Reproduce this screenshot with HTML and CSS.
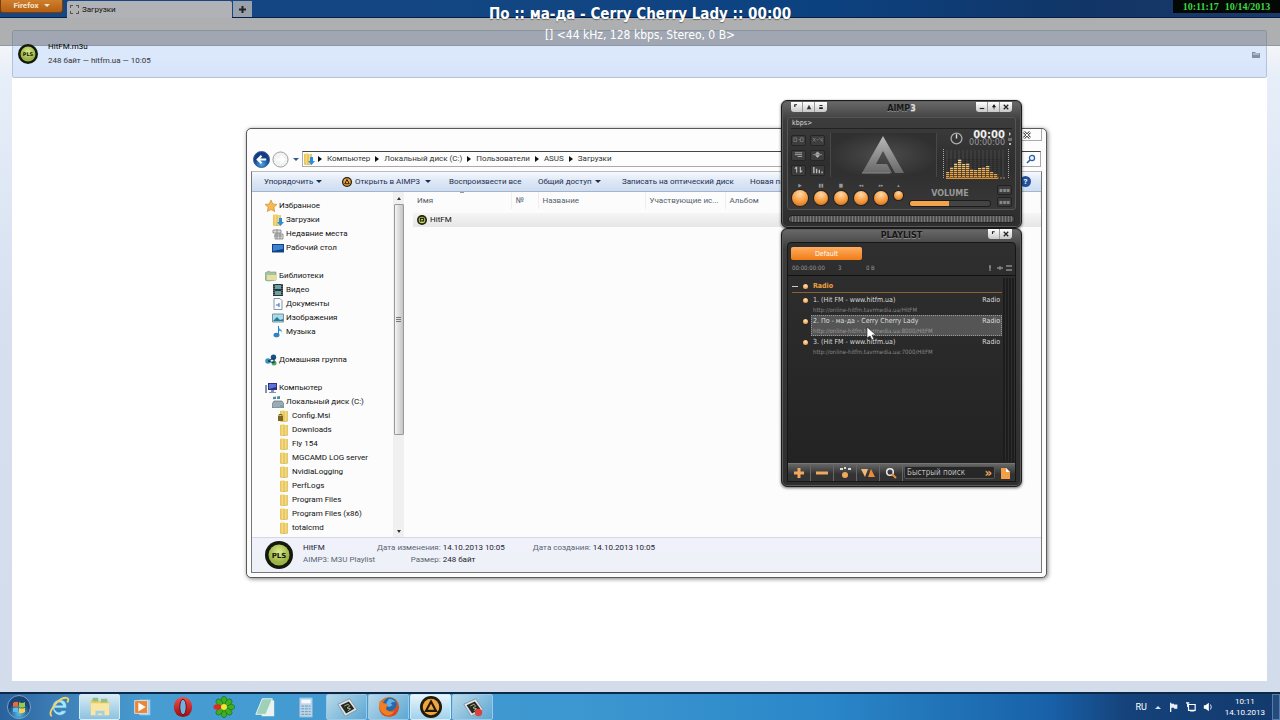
FILE: index.html
```html
<!DOCTYPE html>
<html lang="ru">
<head>
  <meta charset="utf-8">
  <title>Загрузки</title>
  <link rel="stylesheet" href="styles.css">
</head>
<body>

<!-- shared icons -->
<svg class="defs" aria-hidden="true">
  <defs>
    <linearGradient id="gFolder" x1="0" x2="1"><stop offset="0" stop-color="#e8bf4a"/><stop offset=".5" stop-color="#fbeaa0"/><stop offset="1" stop-color="#e2c25a"/></linearGradient>
    <radialGradient id="gPls" cx=".5" cy=".35"><stop offset="0" stop-color="#dcea8c"/><stop offset="1" stop-color="#9bb445"/></radialGradient>
    <radialGradient id="gBack" cx=".5" cy=".8"><stop offset="0" stop-color="#4aa8e8"/><stop offset="1" stop-color="#123c86"/></radialGradient>
    <linearGradient id="gLogo" x1="0" y1="0" x2="0" y2="1"><stop offset="0" stop-color="#b9b9b9"/><stop offset="1" stop-color="#686868"/></linearGradient>
    <linearGradient id="gBar" x1="0" y1="0" x2="0" y2="1"><stop offset="0" stop-color="#f6dc8c"/><stop offset="1" stop-color="#e8902c"/></linearGradient>
    <radialGradient id="gFox" cx=".5" cy=".3"><stop offset="0" stop-color="#ffb52e"/><stop offset="1" stop-color="#d8491a"/></radialGradient>
    <radialGradient id="gOrb" cx=".5" cy=".8"><stop offset="0" stop-color="#54c0ee"/><stop offset="1" stop-color="#1b4478"/></radialGradient>
    <linearGradient id="gOpera" x1="0" y1="0" x2="0" y2="1"><stop offset="0" stop-color="#f0504a"/><stop offset="1" stop-color="#9c0a10"/></linearGradient>
    <pattern id="pGrid" width="4" height="2" patternUnits="userSpaceOnUse"><path d="M3.5 0v2M0 1.5h4" stroke="#2c2c2c" stroke-width=".7"/></pattern>
  </defs>
  <symbol id="folder" viewBox="0 0 12 12"><path d="M2 1l4-1 1 1h3v10l-5 1-3-1z" fill="url(#gFolder)"/><path d="M6 1v11" stroke="#c99c30" stroke-width=".8"/><path d="M2 11l3 1 5-1" stroke="#d4ae4a" fill="none" stroke-width=".6"/></symbol>
  <symbol id="lockfolder" viewBox="0 0 12 12"><use href="#folder"/><rect x="0" y="6" width="5" height="5" fill="#7a6524"/><path d="M1 6V4.500h3V6" stroke="#7a6524" fill="none"/></symbol>
  <symbol id="downfolder" viewBox="0 0 12 12"><use href="#folder" x="-1"/><path d="M7 4h3v4h2l-3.500 4L5 8h2z" fill="#2e8dd8"/></symbol>
  <symbol id="star" viewBox="0 0 12 12"><path d="M6 0l1.800 3.900 4.200.500-3.100 2.900.8 4.300L6 9.500l-3.700 2.100.8-4.300L0 4.400l4.200-.5z" fill="#f8b84c" stroke="#c9822c" stroke-width=".6"/></symbol>
  <symbol id="recent" viewBox="0 0 12 12"><path d="M1 2h8v3H1zM3 6h8v5H3z" fill="#dcdcdc" stroke="#808080" stroke-width=".8"/><path d="M2 8h8M5 1v10M8 5v6" stroke="#777" stroke-width=".7"/></symbol>
  <symbol id="desktop" viewBox="0 0 12 12"><path d="M0 2h12v8H0z" fill="#123f88"/><path d="M1 3h10v4L1 9z" fill="#3f83d0"/><path d="M0 10h12v1H0z" fill="#8ba6c5"/></symbol>
  <symbol id="library" viewBox="0 0 12 12"><path d="M0 3l4-2 1 1h6v8l-8 1-3-1z" fill="#a5c3a0" stroke="#769872" stroke-width=".6"/><path d="M2 5h9v5H2z" fill="#e6dfa0"/></symbol>
  <symbol id="video" viewBox="0 0 12 12"><path d="M1 0h10v12H1z" fill="#25343a"/><path d="M3 1h6v4H3zM3 7h6v4H3z" fill="#6ba49d"/><path d="M2 0v12M10 0v12" stroke="#b2c0c4" stroke-width=".7" stroke-dasharray="1 1"/></symbol>
  <symbol id="doc" viewBox="0 0 12 12"><path d="M2 .5h6l2 2v9H2z" fill="#f8fbff" stroke="#8896a6"/><path d="M4 7h3V5M6 8h2" stroke="#3c6aac" fill="none"/></symbol>
  <symbol id="picture" viewBox="0 0 12 12"><path d="M.5 2h11v8H.5z" fill="#a6dcef" stroke="#7d9098"/><path d="M1 9l4-4 3 3 3-1v2z" fill="#287b91"/></symbol>
  <symbol id="music" viewBox="0 0 12 12"><path d="M6 0c0 3 5 3 4 7 0-2-2-2-3-2v4" fill="#3da7dc"/><ellipse cx="4.500" cy="9" rx="3" ry="2.300" fill="#2e83c8"/><path d="M6.500 0v9" stroke="#2e83c8"/></symbol>
  <symbol id="homegroup" viewBox="0 0 12 12"><circle cx="3" cy="7" r="2.800" fill="#3c91c5"/><circle cx="8.500" cy="3.300" r="2.700" fill="#1c5187"/><circle cx="9" cy="9" r="2.500" fill="#54a35f"/><path d="M3 7l6-3v5z" fill="none" stroke="#123c60"/></symbol>
  <symbol id="computer" viewBox="0 0 12 12"><path d="M3 1h9v7H3z" fill="#28308c"/><path d="M4 2h7v3L4 7z" fill="#5d72d2"/><path d="M6 8h3v2h2v1H4v-1h2zM0 3h2v8H0z" fill="#8792a8"/></symbol>
  <symbol id="drive" viewBox="0 0 12 12"><path d="M0 8l2-3h8l2 3v4H0z" fill="#9cabb6" stroke="#5f717d" stroke-width=".7"/><path d="M1 1l3-.5V3l-3 .3zM5 .4L8 0v3H5z" fill="#4f8ea0"/><path d="M8 10h3" stroke="#3cb05a"/></symbol>
  <symbol id="aimp" viewBox="0 0 20 20"><circle cx="10" cy="10" r="10" fill="#211b0c"/><circle cx="10" cy="10" r="7.500" fill="#f0a63c"/><path d="M10 5l4.500 8.500h-9z" fill="none" stroke="#211b0c" stroke-width="2"/></symbol>
  <symbol id="aimpfile" viewBox="0 0 12 12"><circle cx="6" cy="6" r="6" fill="#20230e"/><circle cx="6" cy="6" r="4" fill="#c8d562"/><path d="M4 8V4h4v3H5" fill="none" stroke="#20230e" stroke-width="1.300"/></symbol>
  <symbol id="shot" viewBox="0 0 24 20"><path d="M2 7l13-6 8 12-13 7z" fill="#dfe4e6" stroke="#6f7d86" stroke-width=".7"/><path d="M5 8l9-4 6 8-9 5z" fill="#242923"/><path d="M9 9l4-2 2 2-3 2 4 1-3 2" stroke="#b9b98a" fill="none"/></symbol>
</svg>

<div class="desktop">

  <!-- firefox with the downloads tab -->
  <header class="ff-bar">
    <button class="ff-menu" type="button">Firefox <i class="arrow"></i></button>
    <a class="ff-tab" href="#"><i class="tab-icon"></i>Загрузки</a>
    <button class="ff-new" type="button" aria-label="Новая вкладка"><svg viewBox="0 0 9 9"><path d="M4.500 1v7M1 4.500h7" stroke="#222" stroke-width="2"/></svg></button>
  </header>
  <main class="ff-page">
    <div class="downloads">
      <div class="download">
        <svg class="dl-icon" viewBox="0 0 28 28"><circle cx="14" cy="14" r="14" fill="#15180d"/><circle cx="14" cy="14" r="10.500" fill="url(#gPls)"/><text x="14" y="17" text-anchor="middle" class="pls-text">PLS</text></svg>
        <div class="dl-text">
          <div class="dl-name">HitFM.m3u</div>
          <div>248 байт — hitfm.ua — 10:05</div>
        </div>
        <button class="dl-open" type="button" aria-label="Открыть папку"><svg viewBox="0 0 8 7"><path d="M0 1h3l1 1h4v5H0z" fill="#7f91a3"/><path d="M1 3h6" stroke="#d3dded"/></svg></button>
      </div>
    </div>
  </main>

  <!-- now playing overlay -->
  <div class="osd">
    <div class="osd-title">По :: ма-да - Cerry Cherry Lady :: 00:00</div>
    <div class="osd-info">[] &lt;44 kHz, 128 kbps, Stereo, 0 B&gt;</div>
  </div>
  <div class="stamp"><span>10:11:17</span><span>10/14/2013</span></div>

  <!-- explorer -->
  <section class="explorer">
    <div class="ex-title"><button class="ex-close" type="button" aria-label="Закрыть"><svg viewBox="0 0 8 8"><path d="M1 1l6 6M7 1L1 7" stroke="#555" stroke-width="2.600"/><path d="M1 1l6 6M7 1L1 7" stroke="#fff"/></svg></button></div>
    <div class="ex-nav">
      <button type="button" class="round" aria-label="Назад"><svg viewBox="0 0 18 18"><circle cx="9" cy="9" r="8.500" fill="url(#gBack)" stroke="#3e5f8e"/><path d="M14 9H5M9 5L5 9l4 4" stroke="#fff" stroke-width="2.200" fill="none"/></svg></button>
      <button type="button" class="round" aria-label="Вперёд"><svg viewBox="0 0 18 18"><circle cx="9" cy="9" r="8" fill="#f1f2f4" stroke="#999"/><path d="M4 9h9M9 5l4 4-4 4" stroke="#fff" stroke-width="2" fill="none"/></svg></button>
      <i class="arrow nav-arrow"></i>
      <nav class="address">
        <svg class="ico"><use href="#downfolder"/></svg>
        <a href="#">Компьютер</a><a href="#">Локальный диск (C:)</a><a href="#">Пользователи</a><a href="#">ASUS</a><a href="#">Загрузки</a>
      </nav>
      <button class="ex-search" type="button" aria-label="Поиск"><svg viewBox="0 0 10 10"><circle cx="6" cy="4" r="2.600" fill="#e6f2ff" stroke="#2c5da0" stroke-width="1.200"/><path d="M4 6L1 9" stroke="#2c5da0" stroke-width="1.600"/></svg></button>
    </div>
    <div class="ex-frame">
      <div class="ex-tools">
        <button type="button">Упорядочить <i class="arrow"></i></button>
        <button type="button"><svg class="ico"><use href="#aimp"/></svg>Открыть в AIMP3 <i class="arrow wide"></i></button>
        <button type="button">Воспроизвести все</button>
        <button type="button">Общий доступ <i class="arrow"></i></button>
        <button type="button">Записать на оптический диск</button>
        <button type="button">Новая папка</button>
        <button type="button" class="help" aria-label="Справка">?</button>
      </div>
      <div class="ex-body">
        <nav class="tree">
          <ul>
            <li><a href="#"><svg class="ico"><use href="#star"/></svg>Избранное</a></li>
            <li class="l1"><a href="#"><svg class="ico"><use href="#downfolder"/></svg>Загрузки</a></li>
            <li class="l1"><a href="#"><svg class="ico"><use href="#recent"/></svg>Недавние места</a></li>
            <li class="l1"><a href="#"><svg class="ico"><use href="#desktop"/></svg>Рабочий стол</a></li>
          </ul>
          <ul>
            <li><a href="#"><svg class="ico"><use href="#library"/></svg>Библиотеки</a></li>
            <li class="l1"><a href="#"><svg class="ico"><use href="#video"/></svg>Видео</a></li>
            <li class="l1"><a href="#"><svg class="ico"><use href="#doc"/></svg>Документы</a></li>
            <li class="l1"><a href="#"><svg class="ico"><use href="#picture"/></svg>Изображения</a></li>
            <li class="l1"><a href="#"><svg class="ico"><use href="#music"/></svg>Музыка</a></li>
          </ul>
          <ul>
            <li><a href="#"><svg class="ico"><use href="#homegroup"/></svg>Домашняя группа</a></li>
          </ul>
          <ul>
            <li><a href="#"><svg class="ico"><use href="#computer"/></svg>Компьютер</a></li>
            <li class="l1"><a href="#"><svg class="ico"><use href="#drive"/></svg>Локальный диск (C:)</a></li>
            <li class="l2"><a href="#"><svg class="ico"><use href="#lockfolder"/></svg>Config.Msi</a></li>
            <li class="l2"><a href="#"><svg class="ico"><use href="#folder"/></svg>Downloads</a></li>
            <li class="l2"><a href="#"><svg class="ico"><use href="#folder"/></svg>Fly 154</a></li>
            <li class="l2"><a href="#"><svg class="ico"><use href="#folder"/></svg>MGCAMD LOG server</a></li>
            <li class="l2"><a href="#"><svg class="ico"><use href="#folder"/></svg>NvidiaLogging</a></li>
            <li class="l2"><a href="#"><svg class="ico"><use href="#folder"/></svg>PerfLogs</a></li>
            <li class="l2"><a href="#"><svg class="ico"><use href="#folder"/></svg>Program Files</a></li>
            <li class="l2"><a href="#"><svg class="ico"><use href="#folder"/></svg>Program Files (x86)</a></li>
            <li class="l2"><a href="#"><svg class="ico"><use href="#folder"/></svg>totalcmd</a></li>
          </ul>
        </nav>
        <div class="scroll"><i class="up"></i><div class="thumb"></div><i class="down"></i></div>
        <div class="files">
          <table>
            <colgroup><col class="c-name"><col class="c-num"><col class="c-title"><col class="c-artist"><col></colgroup>
            <thead><tr><th class="sorted">Имя</th><th>№</th><th>Название</th><th>Участвующие ис...</th><th>Альбом</th></tr></thead>
            <tbody><tr><td colspan="5"><div class="file"><svg class="ico"><use href="#aimpfile"/></svg>HitFM</div></td></tr></tbody>
          </table>
        </div>
      </div>
      <footer class="details">
        <svg class="big-icon" viewBox="0 0 28 28"><circle cx="14" cy="14" r="14" fill="#15180d"/><circle cx="14" cy="14" r="10.500" fill="url(#gPls)"/><text x="14" y="17" text-anchor="middle" class="pls-text">PLS</text></svg>
        <div class="d-name"><div class="val">HitFM</div><div>AIMP3: M3U Playlist</div></div>
        <dl>
          <dt>Дата изменения:</dt><dd>14.10.2013 10:05</dd>
          <dt>Размер:</dt><dd>248 байт</dd>
        </dl>
        <dl>
          <dt>Дата создания:</dt><dd>14.10.2013 10:05</dd>
        </dl>
      </footer>
    </div>
  </section>

  <!-- AIMP player -->
  <section class="skin player">
    <header class="skin-head">
      <div class="caps">
        <button type="button" aria-label="Меню"><svg viewBox="0 0 8 8"><path d="M1 4V1h3" stroke="#222" fill="none" stroke-width="1.500"/></svg></button>
        <button type="button" aria-label="Поверх окон"><svg viewBox="0 0 8 8"><path d="M4 1l3 6H1z" fill="#333"/></svg></button>
        <button type="button" aria-label="В трей"><svg viewBox="0 0 8 8"><path d="M2 2h4M2 5h4v1H2z" stroke="#222" stroke-width="1.300"/></svg></button>
      </div>
      <h2>AIMP<small>3</small></h2>
      <div class="caps">
        <button type="button" aria-label="Свернуть"><svg viewBox="0 0 8 8"><path d="M1 6h6" stroke="#222" stroke-width="1.500"/></svg></button>
        <button type="button" aria-label="Компактный вид"><svg viewBox="0 0 8 8"><path d="M4 1v6M2 4l2-3 2 3z" stroke="#222"/></svg></button>
        <button type="button" aria-label="Закрыть"><svg viewBox="0 0 8 8"><path d="M1 1l6 6M7 1L1 7" stroke="#222" stroke-width="1.700"/></svg></button>
      </div>
    </header>
    <div class="panel">
      <div class="ticker">kbps&gt;</div>
      <div class="stage">
        <div class="pads">
          <button type="button" aria-label="Повтор"><svg viewBox="0 0 12 8"><path d="M1 2h3v4H1zM6 4h2M8 2h3v4H8z" stroke="#777" fill="none"/></svg></button>
          <button type="button" aria-label="Случайно"><svg viewBox="0 0 12 8"><path d="M1 2l3 4M4 2L1 6M5 4h2M8 2l3 4M11 2v4" stroke="#777" fill="none"/></svg></button>
          <button type="button" aria-label="Список"><svg viewBox="0 0 12 8"><path d="M2 2h8M2 4h8M5 6h5" stroke="#aaa"/></svg></button>
          <button type="button" aria-label="Баланс"><svg viewBox="0 0 12 8"><path d="M1 4h10M4 3l2-2 2 2zM4 5l2 2 2-2z" stroke="#bbb" fill="#bbb" stroke-width=".7"/></svg></button>
          <button type="button" aria-label="Сортировка"><svg viewBox="0 0 12 8"><path d="M4 1v6M2 3l2-2M8 1v6M8 7l2-2" stroke="#bbb" stroke-width="1.200"/></svg></button>
          <button type="button" aria-label="Эквалайзер"><svg viewBox="0 0 12 8"><path d="M2 1v7M5 3v5M8 4v4M11 6v2" stroke="#bbb" stroke-width="1.500"/></svg></button>
        </div>
        <div class="screen">
          <svg viewBox="0 0 44 38"><path d="M21 0L42 37H33L21 15 14 28h11l5 9H0z" fill="url(#gLogo)"/><path d="M0 37h28" stroke="#8b8b8b"/></svg>
        </div>
        <div class="meter">
          <div class="clock">
            <svg viewBox="0 0 12 12"><circle cx="6" cy="6" r="5" fill="none" stroke="#aaa" stroke-width="1.200"/><path d="M6 2v4" stroke="#ddd" stroke-width="1.300"/></svg>
            <div><b>00:00</b><span>00:00:00</span></div>
            <svg class="states" viewBox="0 0 4 14"><path d="M1 0l2 2-2 2z" fill="#ccc"/><path d="M1 6v3M3 6v3" stroke="#aaa"/><path d="M1 11h2v2H1z" fill="#bbb"/></svg>
          </div>
          <svg class="spectrum" viewBox="0 0 68 32">
            <path d="M1.500 1v30M66.500 1v30" stroke="#aaa" stroke-dasharray="1 1"/>
            <path d="M5 2v27M9 2v27M13 2v27M17 2v27M21 2v27M25 2v27M29 2v27M33 2v27M37 2v27M41 2v27M45 2v27M49 2v27M53 2v27M57 2v27M61 2v27" stroke="#484848"/>
            <path d="M4 24h4v-5h4v-4h4v-4h4v5h4v-1h4v6h4v1h4v-2h4v-1h4v-1h4v6h4v2h4v5H4z" fill="url(#gBar)"/>
            <path d="M4 10h56v20H4z" fill="url(#pGrid)"/>
            <path d="M4 30h60" stroke="#a98c58" stroke-dasharray="2 1"/>
          </svg>
        </div>
      </div>
      <div class="deck">
        <div class="transport">
          <button type="button" class="play"><span>▶</span><i></i></button>
          <button type="button"><span>▮▮</span><i></i></button>
          <button type="button"><span>■</span><i></i></button>
          <button type="button"><span>◂◂</span><i></i></button>
          <button type="button"><span>▸▸</span><i></i></button>
          <button type="button" class="eject"><span>▴</span><i></i></button>
        </div>
        <div class="volume">
          <label for="vol">VOLUME</label>
          <input id="vol" type="range" min="0" max="100" value="49">
        </div>
        <div class="modes"><button type="button" aria-label="A-B">▪▪▪</button><button type="button" aria-label="Таймер">▪▪▪</button></div>
      </div>
    </div>
    <div class="seek"></div>
  </section>

  <!-- AIMP playlist -->
  <section class="skin playlist">
    <header class="skin-head">
      <h2>PLAYLIST</h2>
      <div class="caps">
        <button type="button" aria-label="Меню"><svg viewBox="0 0 8 8"><path d="M2 4V1h3" stroke="#222" fill="none" stroke-width="1.500"/></svg></button>
        <button type="button" aria-label="Закрыть"><svg viewBox="0 0 8 8"><path d="M1 1l6 6M7 1L1 7" stroke="#222" stroke-width="1.700"/></svg></button>
      </div>
    </header>
    <div class="panel">
      <button class="pl-tab" type="button">Default</button>
      <div class="pl-info"><span>00:00:00:00</span><span>3</span><span>0 B</span><svg viewBox="0 0 26 8"><path d="M4 1v6M3 3h2M11 4h6M14 2v4M20 2h6M20 6h6" stroke="#8a8a8a" stroke-width="1.300"/></svg></div>
      <div class="pl-list">
        <div class="pl-items">
          <div class="group"><i class="minus"></i><i class="dot"></i>Radio</div>
          <div class="track"><i class="dot"></i><div class="t-body"><div class="t-line"><span>1. (Hit FM - www.hitfm.ua)</span><span>Radio</span></div><div class="url">http://online-hitfm.tavrmedia.ua/HitFM</div></div></div>
          <div class="track on"><i class="dot"></i><div class="t-body"><div class="t-line"><span>2. По - ма-да - Cerry Cherry Lady</span><span>Radio</span></div><div class="url">http://online-hitfm.tavrmedia.ua:8000/HitFM</div></div></div>
          <div class="track"><i class="dot"></i><div class="t-body"><div class="t-line"><span>3. (Hit FM - www.hitfm.ua)</span><span>Radio</span></div><div class="url">http://online-hitfm.tavrmedia.ua:7000/HitFM</div></div></div>
        </div>
        <div class="pl-scroll"></div>
      </div>
      <div class="pl-tools">
        <button type="button" aria-label="Добавить"><svg viewBox="0 0 14 12"><path d="M7 1v10M2 6h10" stroke="#f0a95c" stroke-width="3"/></svg></button>
        <button type="button" aria-label="Удалить"><svg viewBox="0 0 14 12"><path d="M1 6h12" stroke="#f0a95c" stroke-width="3"/></svg></button>
        <button type="button" aria-label="Разное"><svg viewBox="0 0 14 12"><circle cx="7" cy="8" r="3" fill="#f0a95c"/><path d="M2 2h3M6 1h2M10 2h3" stroke="#ddd" stroke-width="2"/></svg></button>
        <button type="button" aria-label="Сортировать"><svg viewBox="0 0 14 12"><path d="M0 2h7L4 10z" fill="#f2b878"/><path d="M7 10h7L10 2z" fill="#ee8c35"/></svg></button>
        <button type="button" aria-label="Найти"><svg viewBox="0 0 14 12"><circle cx="6" cy="5" r="3.300" fill="none" stroke="#eee" stroke-width="1.500"/><path d="M8 7l4 4" stroke="#ee8c35" stroke-width="2"/></svg></button>
        <div class="quick"><input type="text" aria-label="Быстрый поиск" placeholder="Быстрый поиск"><span>»</span></div>
        <button type="button" aria-label="Плейлисты" class="last"><svg viewBox="0 0 14 12"><path d="M3 1h5l4 4v7H3z" fill="#f4a04a"/><path d="M8 1v4h4" fill="#fff"/></svg></button>
      </div>
    </div>
  </section>

  <svg class="cursor" viewBox="0 0 10 14"><path d="M1 0v11l3-2 2 4 2-1-2-4h4z" fill="#fff" stroke="#222" stroke-width=".6"/></svg>

  <!-- taskbar -->
  <footer class="taskbar">
    <button type="button" class="start" aria-label="Пуск"><svg viewBox="0 0 24 24"><circle cx="12" cy="12" r="11.500" fill="url(#gOrb)" stroke="#7aa6c6"/><path d="M6 8q3-2 5-1v5q-3-1-5 0z" fill="#ee6a32"/><path d="M12 7q3 2 6 0v5q-3 1-6 0z" fill="#98cc45"/><path d="M6 13q3-1 5 0v5q-3-2-5-1z" fill="#5dbcf0"/><path d="M12 13q3 1 6 0v4q-3 2-6 1z" fill="#fbd04a"/></svg></button>
    <button type="button" aria-label="Internet Explorer"><svg viewBox="0 0 24 24"><path d="M7 13h13c1-6-3-9-7-9s-8 3-8 8 4 9 8 9c3 0 6-2 7-5h-5c-2 3-7 2-8-3zm1-3c1-4 7-4 8 0z" fill="#a6e5fb" stroke="#3c8fc4" stroke-width=".6"/><path d="M4 22C-1 18 12 1 20 2c2 0 3 2 1 5" fill="none" stroke="#f4d560" stroke-width="2"/></svg></button>
    <button type="button" class="open" aria-label="Проводник"><svg viewBox="0 0 24 24"><path d="M2 4h8l2 2h10v15H2z" fill="#eecb60"/><path d="M4 2h6v4H4zM13 3h7v4h-7z" fill="#8fc08c"/><path d="M2 8h20v13H2z" fill="#f8e7a4"/><path d="M7 22v-6h10v6h-3v-3h-4v3z" fill="#a4cfe9"/></svg></button>
    <button type="button" aria-label="Проигрыватель"><svg viewBox="0 0 24 24"><path d="M9 4h12v17H9z" fill="#a9cfe9"/><path d="M4 5h14v14H4z" fill="#ec8535" stroke="#d8e2ea"/><path d="M8 7l8 5-8 5z" fill="#fff"/></svg></button>
    <button type="button" aria-label="Opera"><svg viewBox="0 0 24 24"><ellipse cx="12" cy="12" rx="10" ry="11" fill="url(#gOpera)"/><ellipse cx="12" cy="12" rx="3.500" ry="8.500" fill="#6fb4df" stroke="#6b0a10"/></svg></button>
    <button type="button" aria-label="ICQ"><svg viewBox="0 0 24 24"><g fill="#3fae1f" stroke="#176d10" stroke-width=".7"><ellipse cx="12" cy="5" rx="3" ry="4.500"/><ellipse cx="12" cy="19" rx="3" ry="4.500"/><ellipse cx="19" cy="12" rx="4.500" ry="3"/><ellipse cx="17" cy="7" rx="4.300" ry="3" transform="rotate(-45 17 7)"/><ellipse cx="7" cy="7" rx="4.300" ry="3" transform="rotate(45 7 7)"/><ellipse cx="17" cy="17" rx="4.300" ry="3" transform="rotate(45 17 17)"/><ellipse cx="7" cy="17" rx="4.300" ry="3" transform="rotate(-45 7 17)"/></g><ellipse cx="5" cy="12" rx="4.500" ry="3" fill="#df2b1c"/><circle cx="12" cy="12" r="3.300" fill="#f3e53c"/></svg></button>
    <button type="button" aria-label="Блокнот"><svg viewBox="0 0 24 24"><path d="M17 4l5 1v17H8z" fill="#e9f3f2"/><path d="M9 3h11l-7 17H2z" fill="#9fd1b9" stroke="#e9f3f2"/></svg></button>
    <button type="button" aria-label="Калькулятор"><svg viewBox="0 0 24 24"><path d="M5 2h14v21H5z" fill="#bcd6ea" stroke="#88b0d0"/><path d="M7 4h10v4H7z" fill="#f5fafe"/><path d="M7 11h10M7 14h10M7 17h10M7 20h10" stroke="#6690b4" stroke-dasharray="3 1"/></svg></button>
    <button type="button" class="open dim" aria-label="Снимок экрана"><svg viewBox="0 0 24 20"><use href="#shot"/></svg></button>
    <button type="button" class="open dim" aria-label="Firefox"><svg viewBox="0 0 24 24"><circle cx="12" cy="12" r="11" fill="url(#gFox)"/><circle cx="13" cy="9" r="7.500" fill="#2768ad"/><path d="M12 3q5 0 7 4-3-1-5 1l2 2-4 2q-3-1-3-4z" fill="#5fb2e2"/><path d="M2 5l4 3q4 0 5 3-3 1-2 4 4 4 9 1-3 6-9 5-7-3-8-10z" fill="#f07e22"/></svg></button>
    <button type="button" class="open lit" aria-label="AIMP3"><svg viewBox="0 0 20 20"><use href="#aimp"/></svg></button>
    <button type="button" class="open dim" aria-label="Запись экрана"><svg viewBox="0 0 24 20"><use href="#shot"/><circle cx="18" cy="16" r="4" fill="#dc4040"/></svg></button>
    <div class="tray">
      <span>RU</span>
      <i class="tray-up"></i>
      <svg viewBox="0 0 12 12"><path d="M2 1v11" stroke="#fff" stroke-width="1.500"/><path d="M2 2h4v1h4v5H6V7H2z" fill="#e8eef6"/></svg>
      <svg viewBox="0 0 12 12"><path d="M3 3h8v7H3zM0 1h4M2 1v5M5 12h5" stroke="#fff" fill="none" stroke-width="1.400"/></svg>
      <svg viewBox="0 0 12 12"><path d="M1 4h2l4-3v10L3 8H1z" fill="#fff"/><path d="M9 3q2 3 0 6" stroke="#fff" fill="none"/></svg>
      <div class="time">10:11<br>14.10.2013</div>
      <button type="button" class="show" aria-label="Свернуть все окна"></button>
    </div>
  </footer>
</div>

</body>
</html>
```
FILE: styles.css
```css
* {
  box-sizing: border-box;
}

body {
  margin: 0;
  font-family: Roboto, "Noto Sans", sans-serif;
  font-size: 8px;
  line-height: 12px;
  color: #111;
}

button, input {
  font: inherit;
  color: inherit;
  margin: 0;
  padding: 0;
  border: 0;
  background: none;
}

a {
  color: inherit;
  text-decoration: none;
}

ul, dl, dd, h2 {
  margin: 0;
  padding: 0;
  list-style: none;
}

svg {
  display: block;
  flex: none;
}

.defs {
  position: absolute;
  width: 0;
  height: 0;
}

.desktop {
  position: relative;
  display: flex;
  flex-direction: column;
  min-height: 100vh;
  overflow: hidden;
  background: #d3dcea;
}

.ico {
  width: 12px;
  height: 12px;
}

.arrow {
  display: inline-block;
  border: 3px solid transparent;
  border-top-color: currentColor;
  border-bottom: 0;
  margin-left: 3px;
  vertical-align: middle;
}

.arrow.wide {
  margin-left: 5px;
}

.pls-text {
  font: bold 7px "DejaVu Sans", sans-serif;
  fill: #15180d;
}

/* firefox */
.ff-bar {
  display: flex;
  align-items: flex-end;
  height: 18px;
  background: linear-gradient(90deg, #174684, #124683 40%, #0c4180 65%, #113566 85%, #1b3a6c);
  border-bottom: 1px solid #071e4a;
}

.ff-menu {
  align-self: flex-start;
  width: 63px;
  height: 13px;
  margin-right: 4px;
  background: linear-gradient(#cf7f2e, #b55f10);
  border: 1px solid #7a3d08;
  border-top: 0;
  border-radius: 0 0 3px 3px;
  color: #f3e4d2;
  font-weight: bold;
}

.ff-tab {
  display: flex;
  align-items: center;
  gap: 3px;
  width: 165px;
  height: 17px;
  padding-left: 3px;
  margin-bottom: -1px;
  background: #b1b2b6;
  border-radius: 2px 2px 0 0;
}

.tab-icon {
  width: 9px;
  height: 9px;
  border: 1px dashed #555;
}

.ff-new {
  display: flex;
  align-items: center;
  justify-content: center;
  width: 19px;
  height: 16px;
  margin-left: 1px;
  background: #99a1ad;
}

.ff-new svg {
  width: 9px;
}

.ff-page {
  flex: 1;
  display: flex;
  padding: 12px 13px 11px 12px;
  background: linear-gradient(#f4f6f8 27px, #e6eef9 60px, #d6e0ef 300px, #d3dcea);
}

.downloads {
  flex: 1;
  background: #fff;
}

.download {
  display: flex;
  align-items: center;
  height: 48px;
  padding: 0 6px 0 5px;
  background: linear-gradient(#dbe7fb 60%, #d7e3f8);
  border: 1px solid #b4c4d6;
  border-radius: 2px;
  color: #333;
}

.dl-icon {
  width: 20px;
  height: 20px;
  margin-right: 10px;
}

/* file name stays readable over the overlay strip */
.dl-icon,
.dl-text {
  position: relative;
  z-index: 1;
}

.dl-text {
  flex: 1;
  line-height: 14px;
}

.dl-name {
  color: #000;
}

.dl-open svg {
  width: 8px;
  height: 7px;
}

/* overlay */
.osd {
  position: absolute;
  top: 18px;
  left: 0;
  right: 0;
  height: 28px;
  background: rgba(88, 88, 88, .45);
  border-bottom: 1px solid #8f98a5;
  color: #fff;
  text-align: center;
  font-family: "DejaVu Sans Condensed", "DejaVu Sans", sans-serif;
}

.osd-title {
  font-size: 15px;
  line-height: 18px;
  font-weight: bold;
  margin-top: -13px;
  text-shadow: 0 1px 1px rgba(0, 0, 0, .4);
}

.osd-info {
  font-size: 12px;
  line-height: 24px;
}

.stamp {
  position: absolute;
  top: 0;
  right: 0;
  display: flex;
  justify-content: center;
  gap: 6px;
  width: 107px;
  height: 13px;
  background: #040804;
  color: #3fd544;
  font: bold 10px/13px "Liberation Serif", serif;
}

/* explorer */
.explorer {
  position: absolute;
  left: 246px;
  top: 128px;
  width: 801px;
  height: 450px;
  display: flex;
  flex-direction: column;
  padding: 0 4px 4px;
  background: #fdfdfd;
  border: 1px solid #5a5a5a;
  border-radius: 5px;
  box-shadow: 1px 1px 4px rgba(0, 0, 0, .5);
}

.ex-title {
  height: 21px;
  display: flex;
  justify-content: flex-end;
}

.ex-close {
  width: 31px;
  height: 12px;
  display: flex;
  align-items: center;
  justify-content: center;
  border: 1px solid #aaa;
  border-top: 0;
}

.ex-close svg {
  width: 8px;
}

.ex-nav {
  display: flex;
  align-items: center;
  height: 18px;
  padding: 0 1px 0 2px;
  gap: 2px;
}

.round svg {
  width: 17px;
  height: 17px;
}

.nav-arrow {
  margin: 0 1px 0 2px;
  color: #33588c;
}

.address {
  display: flex;
  align-items: center;
  flex: 1;
  height: 16px;
  border: 1px solid #aaa;
  border-top-color: #444;
  color: #333;
}

.address a {
  display: flex;
  align-items: center;
  margin-left: 5px;
}

.address a::before {
  content: "";
  border: 3px solid transparent;
  border-left: 4px solid #111;
  border-right: 0;
  margin-right: 5px;
}

.address a:first-of-type {
  margin-left: 3px;
}

.ex-search {
  width: 20px;
  height: 16px;
  border: 1px solid #aaa;
  border-top-color: #444;
}

.ex-search svg {
  width: 10px;
  margin: auto;
}

.ex-frame {
  flex: 1;
  min-height: 0;
  display: flex;
  flex-direction: column;
  margin-top: 3px;
  border: 1px solid #777;
  border-top-color: #bbb;
}

.ex-tools {
  display: grid;
  grid-template-columns: 78px 107px 89px 84px 128px 1fr 20px;
  align-items: center;
  height: 20px;
  padding: 0 10px 0 12px;
  background: linear-gradient(#f6f9fe, #dce7f6 50%, #cfddf1);
  border-bottom: 1px solid #a3b4cc;
  color: #1e2f4e;
}

.ex-tools button {
  display: flex;
  align-items: center;
  text-align: left;
  white-space: nowrap;
}

.ex-tools .ico {
  width: 10px;
  height: 10px;
  margin-right: 3px;
}

.ex-tools .help {
  justify-content: center;
  justify-self: end;
  width: 11px;
  height: 11px;
  border-radius: 50%;
  background: #23509e;
  color: #fff;
  font-weight: bold;
}

.ex-body {
  flex: 1;
  min-height: 0;
  display: flex;
  background: #fcfcfc;
}

.tree {
  width: 141px;
  padding: 7px 0 0 13px;
  overflow: hidden;
}

.tree ul {
  margin-bottom: 14px;
}

.tree a {
  display: flex;
  align-items: center;
  gap: 2px;
  height: 14px;
}

.l1 {
  padding-left: 7px;
}

.l2 {
  padding-left: 13px;
}

.scroll {
  width: 11px;
  display: flex;
  flex-direction: column;
  align-items: center;
  background: #f0f0f0;
}

.scroll .up,
.scroll .down {
  margin: 5px 0 4px;
  border: 2px solid transparent;
  border-bottom: 3px solid #333;
  border-top: 0;
}

.scroll .down {
  margin-top: auto;
  border-top: 3px solid #333;
  border-bottom: 0;
}

.thumb {
  width: 10px;
  height: 231px;
  border: 1px solid #999;
  border-radius: 1px;
  background:
    repeating-linear-gradient(#777 0 1px, transparent 1px 2px) center / 5px 5px no-repeat,
    linear-gradient(90deg, #f4f4f4, #dcdcdc 50%, #c4c4c4);
}

.files {
  flex: 1;
  min-width: 0;
  padding-left: 9px;
}

.files table {
  width: 100%;
  table-layout: fixed;
  border-collapse: collapse;
}

.c-name { width: 98px; }
.c-num { width: 27px; }
.c-title { width: 107px; }
.c-artist { width: 80px; }

.files th {
  height: 17px;
  padding: 0 0 0 4px;
  font-weight: normal;
  text-align: left;
  white-space: nowrap;
  color: #555f6c;
  border-right: 1px solid #eee;
}

.sorted {
  background: linear-gradient(90deg, #999, #999) center top / 4px 1px no-repeat;
}

.files td {
  padding: 4px 0 0;
}

.file {
  display: flex;
  align-items: center;
  gap: 3px;
  height: 14px;
  padding-left: 4px;
  background: linear-gradient(#f5f5f5, #e6e6e6);
}

.file .ico {
  width: 10px;
  height: 10px;
}

.details {
  display: flex;
  align-items: flex-start;
  height: 35px;
  padding: 3px 13px;
  background: linear-gradient(#f1f1fb, #edf1f7);
  border-top: 1px solid #d5d8e2;
  color: #5a6674;
}

.big-icon {
  width: 28px;
  height: 28px;
  margin-right: 10px;
}

.d-name {
  width: 74px;
  padding-top: 1px;
}

.val,
.details dd {
  color: #1c2430;
}

.details dl {
  display: grid;
  grid-template-columns: auto auto;
  column-gap: 2px;
  align-content: start;
  margin-right: 28px;
  padding-top: 1px;
}

.details dt {
  text-align: right;
  white-space: nowrap;
}

/* aimp windows */
.skin {
  position: absolute;
  left: 781px;
  width: 241px;
  display: flex;
  flex-direction: column;
  padding: 0 5px;
  background: linear-gradient(#6a6a6a, #3c3c3c 20px, #2e2e2e);
  border: 1px solid #1c1c1c;
  border-radius: 6px;
  box-shadow: inset 0 0 0 1px #5c5c5c, 0 1px 3px rgba(0, 0, 0, .6);
  font-family: "DejaVu Sans Condensed", "DejaVu Sans", sans-serif;
  font-size: 7px;
  color: #ddd;
}

.player {
  top: 100px;
  height: 128px;
}

.playlist {
  top: 228px;
  height: 259px;
}

.skin-head {
  display: grid;
  grid-template-columns: 1fr auto 1fr;
  height: 16px;
  padding: 1px 4px 0;
}

.skin-head h2 {
  grid-column: 2;
  font: bold 8px/13px "DejaVu Sans", sans-serif;
  color: #161616;
  text-shadow: 0 1px 0 #8b8b8b;
}

.skin-head small {
  font-size: 8px;
  color: #ddd;
}

.playlist .skin-head {
  height: 13px;
  padding-top: 0;
}

.caps {
  display: flex;
  height: 10px;
  border-radius: 0 0 3px 3px;
  background: linear-gradient(#fff, #c8c8c8);
  justify-self: start;
}

.caps:last-child {
  justify-self: end;
}

.caps button {
  width: 12px;
  border-right: 1px solid #999;
}

.caps button:last-child {
  border: 0;
}

.caps svg {
  width: 6px;
  height: 6px;
  margin: auto;
}

.panel {
  display: flex;
  flex-direction: column;
  border: 1px solid #555;
  border-radius: 3px;
  background: #2b2b2b;
}

.player .panel {
  height: 93px;
  padding: 0 3px;
  background: linear-gradient(#3d3d3d, #2e2e2e 50%, #383838);
}

.ticker {
  height: 11px;
  line-height: 10px;
  padding-left: 1px;
  border-bottom: 1px solid #222;
}

.stage {
  display: flex;
  height: 52px;
}

.pads {
  display: grid;
  grid-template-columns: 15px 15px;
  gap: 4px;
  align-content: center;
}

.pads button {
  height: 11px;
  border: 1px solid #252525;
  border-radius: 2px;
  background: #3d3d3d;
}

.pads svg {
  width: 11px;
  margin: auto;
}

.screen {
  flex: 1;
  display: flex;
  align-items: center;
  justify-content: center;
  margin: 4px 5px;
  border: 1px solid #484848;
  border-width: 0 1px;
  background: radial-gradient(#4c4c4c, #303030 75%);
}

.screen svg {
  width: 44px;
  height: 38px;
}

.meter {
  width: 70px;
}

.clock {
  display: flex;
  align-items: center;
  justify-content: flex-end;
  gap: 3px;
  height: 19px;
  text-align: right;
  font-family: "DejaVu Sans", sans-serif;
  font-size: 8px;
}

.clock > svg:first-child {
  width: 13px;
  margin-right: 3px;
}

.clock b,
.clock span {
  display: block;
  line-height: 8px;
}

.clock b {
  font-size: 10px;
  line-height: 9px;
  color: #eee;
}

.clock span {
  color: #999;
}

.clock .states {
  width: 4px;
  height: 14px;
}

.spectrum {
  width: 68px;
  height: 32px;
}

.deck {
  display: flex;
  align-items: flex-end;
  height: 28px;
  padding-bottom: 2px;
}

.transport {
  display: flex;
  align-items: flex-start;
  gap: 6px;
  height: 24px;
  padding-left: 1px;
}

.transport button {
  width: 14px;
  text-align: center;
}

.transport span {
  display: block;
  height: 7px;
  font-size: 5px;
  line-height: 5px;
  color: #999;
}

.transport i {
  display: block;
  width: 14px;
  height: 14px;
  margin: 1px auto;
  border-radius: 50%;
  background: radial-gradient(circle at 50% 25%, #ffd9a8, #f79a3e 55%, #c96510);
  box-shadow: 0 0 0 1px #222;
}

.transport .play {
  width: 16px;
}

.play i {
  width: 16px;
  height: 16px;
  margin-top: 0;
}

.transport .eject {
  width: 9px;
}

.eject i {
  width: 9px;
  height: 9px;
}

.volume {
  flex: 1;
  padding: 0 6px;
  text-align: center;
}

.volume label {
  display: block;
  font: bold 8px/12px "DejaVu Sans", sans-serif;
  color: #999;
}

.volume input {
  display: block;
  width: 100%;
  height: 7px;
  appearance: none;
  border: 1px solid #1c1c1c;
  border-radius: 3px;
  background: linear-gradient(90deg, #f3a34e 49%, #444 49%);
}

.volume input::-webkit-slider-thumb {
  appearance: none;
  width: 1px;
}

.modes {
  display: flex;
  flex-direction: column;
  gap: 2px;
}

.modes button {
  width: 15px;
  height: 10px;
  border: 1px solid #222;
  border-radius: 2px;
  background: #3d3d3d;
  color: #888;
  font-size: 6px;
  line-height: 6px;
}

.seek {
  height: 8px;
  margin: 5px 1px 0;
  border: 1px solid #222;
  border-radius: 4px;
  background: repeating-linear-gradient(90deg, #777 0 1px, #505050 1px 3px);
}

/* playlist */
.playlist .panel {
  flex: 1;
  margin-bottom: 4px;
  border-color: #161616;
  border-radius: 4px 4px 0 0;
  background: linear-gradient(#2f2f2f, #222);
}

.pl-tab {
  width: 71px;
  height: 13px;
  margin: 4px 0 0 3px;
  border-radius: 2px;
  background: linear-gradient(#ffae60, #f07c16);
  color: #fff;
  line-height: 12px;
}

.pl-info {
  display: flex;
  height: 16px;
  line-height: 16px;
  padding: 0 3px 0 4px;
  border-bottom: 1px solid #111;
  font-size: 6px;
  color: #999;
}

.pl-info span {
  margin-right: 13px;
}

.pl-info span:nth-child(2) {
  width: 15px;
}

.pl-info svg {
  width: 26px;
  height: 8px;
  margin: 4px 0 0 auto;
}

.pl-list {
  flex: 1;
  display: flex;
}

.pl-items {
  flex: 1;
  padding: 4px 0 0 4px;
}

.pl-scroll {
  width: 12px;
  margin: 2px 0 2px 1px;
  background: repeating-linear-gradient(90deg, #1d1d1d 0 2px, #2d2d2d 2px 3px);
}

.group {
  display: flex;
  align-items: center;
  gap: 5px;
  height: 13px;
  margin-bottom: 1px;
  border-bottom: 1px solid #8a6432;
  color: #f0a040;
  font-weight: bold;
}

.minus {
  width: 6px;
  height: 1px;
  background: #ccc;
}

.dot {
  width: 5px;
  height: 5px;
  border-radius: 50%;
  background: radial-gradient(circle at 50% 30%, #ffe3b5, #ef8b2c);
}

.track {
  display: flex;
  gap: 3px;
  padding-left: 11px;
}

.track .dot {
  margin-top: 4px;
}

.t-body {
  flex: 1;
  height: 21px;
  padding: 0 1px;
  border: 1px solid transparent;
}

.on .t-body {
  border: 1px dotted #999;
  background: #555;
}

.t-line {
  display: flex;
  justify-content: space-between;
  line-height: 10px;
}

.url {
  font-size: 6px;
  line-height: 9px;
  color: #888;
}

.on .url {
  color: #999;
}

.pl-tools {
  display: flex;
  align-items: center;
  height: 18px;
  background: linear-gradient(#666, #333 60%);
  border-top: 1px solid #777;
}

.pl-tools button {
  flex: none;
  width: 23px;
  height: 17px;
  border-right: 1px solid #666;
}

.pl-tools button svg {
  width: 14px;
  height: 12px;
  margin: auto;
}

.pl-tools .last {
  width: 20px;
  border: 0;
}

.quick {
  flex: 1;
  min-width: 0;
  display: flex;
  align-items: center;
  height: 13px;
  margin-left: 1px;
  padding: 0 2px;
  border-radius: 2px;
  background: #272727;
  border: 1px solid #555;
  font-size: 8px;
}

.quick input {
  flex: 1;
  min-width: 0;
}

.quick input::placeholder {
  color: #bbb;
}

.quick span {
  color: #f0a95c;
  font-size: 13px;
  font-weight: bold;
}

.cursor {
  position: absolute;
  left: 866px;
  top: 327px;
  width: 10px;
  height: 14px;
}

/* taskbar */
.taskbar {
  position: relative;
  display: flex;
  height: 28px;
  border-top: 2px solid #0b2a4a;
  background: linear-gradient(90deg, #29629c, #3f7fb8 60px, #479dd2 150px, #3d97d0 45%, #2a86c8 65%, #1861a8 82%, #15427a 88%, #123a6e);
}

.taskbar button {
  width: 41px;
  height: 26px;
}

.taskbar button svg {
  width: 22px;
  height: 22px;
  margin: auto;
}

.taskbar .start {
  width: 38px;
}

.taskbar .start svg {
  width: 24px;
  height: 24px;
}

.taskbar .open {
  margin-right: 1px;
  border: 1px solid #d4ecf8;
  border-radius: 2px;
  background: linear-gradient(#d8ebf4, #8cc2e0);
}

.taskbar .dim {
  border-color: #9cc9e4;
  background: linear-gradient(135deg, #b9d9ea, #5ca7d3);
}

.taskbar .lit {
  background: linear-gradient(#e8f5fb, #9fd2ee);
}

.tray {
  display: flex;
  align-items: center;
  gap: 7px;
  margin-left: auto;
  color: #fff;
}

.tray span {
  font-size: 9px;
}

.tray svg {
  width: 10px;
  height: 10px;
}

.tray-up {
  border: 3px solid transparent;
  border-bottom-color: #cfe0f2;
  border-top: 0;
  margin: 0 1px;
}

.time {
  margin: 0 0 0 5px;
  text-align: center;
  line-height: 11px;
}

.taskbar .show {
  width: 8px;
  border: 1px solid #5a7ba5;
  background: #234b7e;
}
```
